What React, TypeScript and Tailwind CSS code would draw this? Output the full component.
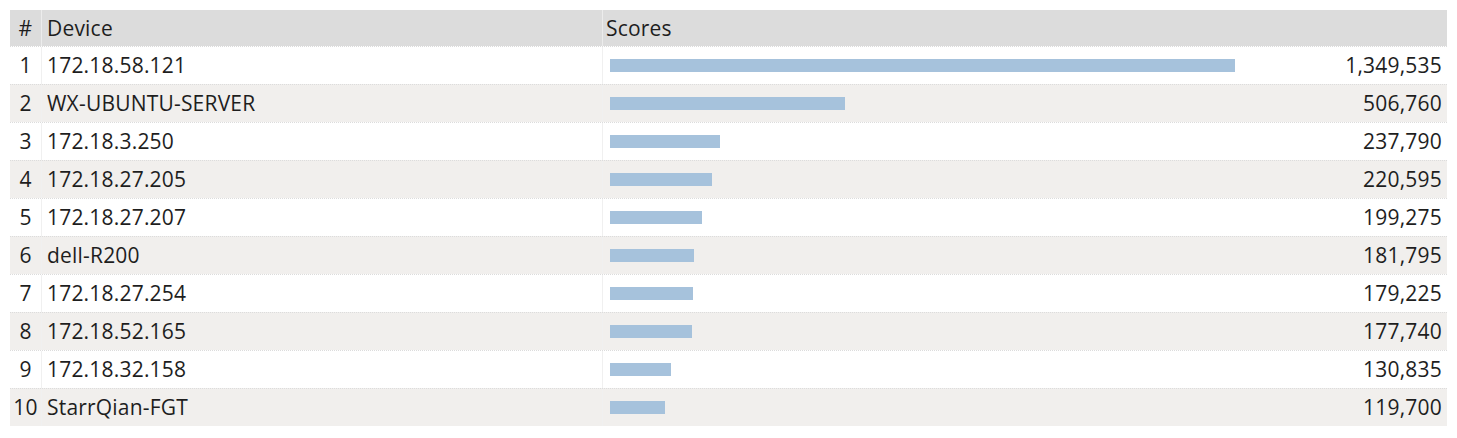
import React from "react";

const rows: [string, number][] = [
  ["172.18.58.121", 1349535],
  ["WX-UBUNTU-SERVER", 506760],
  ["172.18.3.250", 237790],
  ["172.18.27.205", 220595],
  ["172.18.27.207", 199275],
  ["dell-R200", 181795],
  ["172.18.27.254", 179225],
  ["172.18.52.165", 177740],
  ["172.18.32.158", 130835],
  ["StarrQian-FGT", 119700],
];

const max = 1349535;

export default function App() {
  return (
    <div className="bg-white w-[1457px] h-[438px] pt-[10px] pl-[10px] text-[21px] tracking-[0.2px] text-[#1e1e1e]" style={{ fontFamily: '"Open Sans", "Noto Sans", sans-serif' }}>
      <div className="w-[1437px]">
        <div className="grid grid-cols-[32px_561px_1fr] h-[36px] bg-[#dcdcdc] items-center leading-none">
          <div className="text-center h-full flex items-center justify-center border-r border-[#ececec]">#</div>
          <div className="pl-[5px] h-full flex items-center border-r border-[#ececec]">Device</div>
          <div className="pl-[3px]">Scores</div>
        </div>
        {rows.map(([name, v], i) => (
          <div
            key={i}
            className={`grid grid-cols-[32px_561px_1fr] h-[38px] border-t border-dotted border-[#dcdcdc] leading-none ${i % 2 === 0 ? "bg-white" : "bg-[#f1efed]"}`}
          >
            <div className="flex items-center justify-center border-r border-[#f0f0f0]">{i + 1}</div>
            <div className="flex items-center pl-[5px] border-r border-[#f0f0f0]">{name}</div>
            <div className="flex items-center justify-between pl-[7px] pr-[5px]">
              <div className="h-[13px] bg-[#a6c2dc]" style={{ width: `${(v / max) * 625}px` }} />
              <span>{v.toLocaleString("en-US")}</span>
            </div>
          </div>
        ))}
      </div>
    </div>
  );
}
